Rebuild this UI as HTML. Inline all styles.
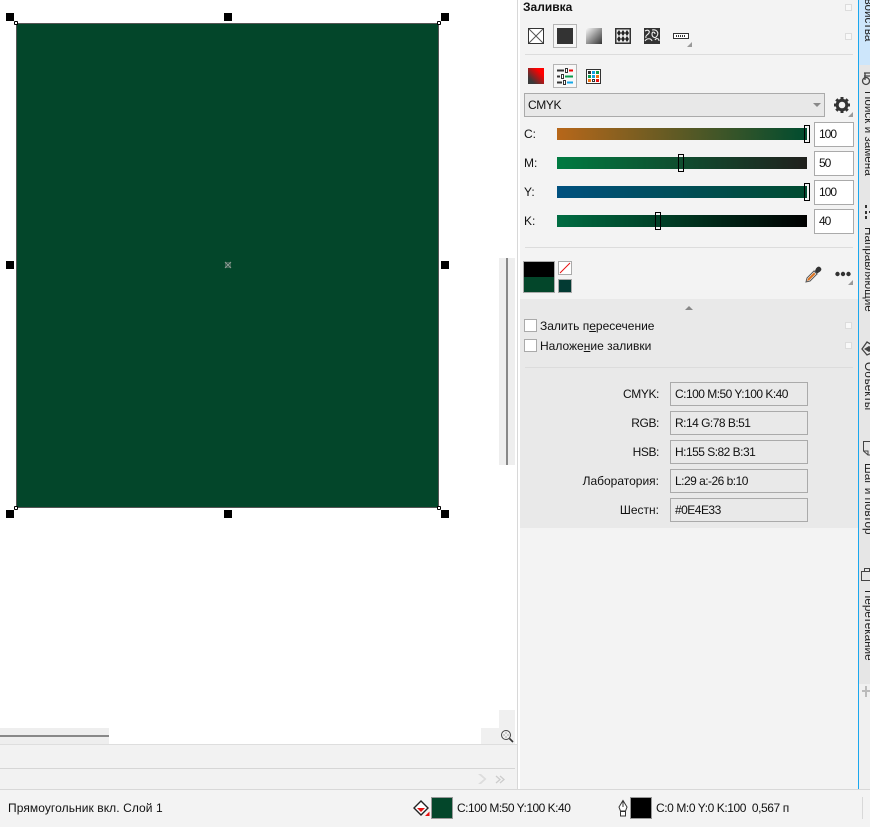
<!DOCTYPE html>
<html lang="ru">
<head>
<meta charset="utf-8">
<title>Заливка</title>
<style>
html,body{margin:0;padding:0;background:#fff}
body{position:relative;width:870px;height:827px;overflow:hidden;font-family:"Liberation Sans",sans-serif;font-size:12px;color:#111}
.a{position:absolute;box-sizing:border-box}
.t{position:absolute;white-space:nowrap;line-height:14px}
.h{position:absolute;width:8px;height:8px;background:#000}
.n{position:absolute;width:4px;height:4px;background:#fff;border:1px solid #000;box-sizing:border-box;border-radius:1px}
.mini{position:absolute;width:7px;height:7px;background:#f8f8f8;border:1px solid #dcdcdc;box-sizing:border-box}
.sep{position:absolute;height:1px;background:#dcdcdc}
.bar{position:absolute;left:557px;width:250px;height:12px}
.th{position:absolute;width:6px;height:18px;border:1px solid #000;box-sizing:border-box}
.inp{position:absolute;left:814px;width:40px;height:25px;background:#fff;border:1px solid #aaa;box-sizing:border-box;padding-left:4px;line-height:23px;letter-spacing:-1px}
.lab{position:absolute;left:524px;line-height:14px}
.rl{position:absolute;right:211px;width:120px;text-align:right;line-height:14px}
.lat{letter-spacing:-.4px}
.val{position:absolute;left:670px;width:138px;height:24px;border:1px solid #aaa;box-sizing:border-box;padding-left:4px;line-height:23px;letter-spacing:-.52px}
.cb{position:absolute;left:524px;width:13px;height:13px;background:#fff;border:1px solid #aaa;box-sizing:border-box}
.v{position:absolute;left:2px;writing-mode:vertical-rl;white-space:nowrap;line-height:14px;font-size:11.7px;color:#222}
.tri{position:absolute;width:0;height:0;border-left:5px solid transparent;border-bottom:5px solid #999}
svg{position:absolute;overflow:visible}
</style>
</head>
<body>
<!-- canvas -->
<div class="a" style="left:16px;top:23px;width:423px;height:485px;background:#03462a;border:1px solid #555"></div>
<div class="h" style="left:6px;top:13px"></div>
<div class="h" style="left:224px;top:13px"></div>
<div class="h" style="left:441px;top:13px"></div>
<div class="h" style="left:6px;top:261px"></div>
<div class="h" style="left:441px;top:261px"></div>
<div class="h" style="left:6px;top:510px"></div>
<div class="h" style="left:224px;top:510px"></div>
<div class="h" style="left:441px;top:510px"></div>
<div class="n" style="left:14px;top:21px"></div>
<div class="n" style="left:437px;top:21px"></div>
<div class="n" style="left:14px;top:506px"></div>
<div class="n" style="left:437px;top:506px"></div>
<svg style="left:225px;top:262px" width="6" height="6"><rect x=".5" y=".5" width="5" height="5" fill="#1c4a38" stroke="#5c7a6c" stroke-width=".6"/><path d="M0 0L6 6M6 0L0 6" stroke="#8a9a92" stroke-width="1.100"/></svg>

<!-- scrollbars -->
<div class="a" style="left:499px;top:258px;width:16px;height:207px;background:#eee"></div>
<div class="a" style="left:506px;top:258px;width:2px;height:207px;background:#888"></div>
<div class="a" style="left:0;top:728px;width:109px;height:16px;background:#eee"></div>
<div class="a" style="left:0;top:735px;width:109px;height:2px;background:#888"></div>
<div class="a" style="left:499px;top:710px;width:16px;height:18px;background:#f0f0f0"></div>
<div class="a" style="left:481px;top:728px;width:34px;height:16px;background:#f0f0f0"></div>
<svg style="left:500px;top:729px" width="14" height="14" viewBox="0 0 14 14"><circle cx="6" cy="6" r="4.500" fill="none" stroke="#444" stroke-width="1"/><path d="M9.500 9.500L13 13" stroke="#333" stroke-width="1.600"/><path d="M6 3.500v1M6 7.500v1M3.500 6h1M7.500 6h1" stroke="#666"/></svg>

<!-- lower bars -->
<div class="a" style="left:0;top:744px;width:517px;height:45px;background:#f2f2f2"></div>
<div class="a" style="left:0;top:744px;width:517px;height:1px;background:#dedede"></div>
<div class="a" style="left:0;top:768px;width:515px;height:1px;background:#d6d6d6"></div>
<svg style="left:477px;top:773px" width="30" height="12" viewBox="0 0 30 12"><path d="M1 1L7 6L1 11H4L9.500 6L4 1Z" fill="#ddd"/><path d="M19 3L23 6.500L19 10M23 3L27 6.500L23 10" fill="none" stroke="#ccc" stroke-width="1.300"/></svg>

<!-- splitter -->
<div class="a" style="left:517px;top:0;width:1px;height:789px;background:#d8d8d8"></div>

<!-- panel -->
<div class="a" style="left:520px;top:0;width:338px;height:789px;background:#f3f3f3"></div>
<div class="a" style="left:858px;top:0;width:1px;height:789px;background:#1aa7ee"></div>
<div class="t" style="left:523px;top:0;font-weight:bold;font-size:12px">Заливка</div>
<div class="mini" style="left:845px;top:4px"></div>
<div class="mini" style="left:845px;top:33px"></div>

<!-- fill type icons -->
<svg style="left:528px;top:28px" width="16" height="16"><rect x=".5" y=".5" width="15" height="15" fill="#fff" stroke="#333"/><path d="M1 1L15 15M15 1L1 15" stroke="#555"/></svg>
<div class="a" style="left:553px;top:24px;width:24px;height:24px;background:#f6f6f6;border:1px solid #b5b5b5"></div>
<div class="a" style="left:557px;top:28px;width:16px;height:16px;background:#333"></div>
<div class="a" style="left:586px;top:28px;width:16px;height:16px;background:linear-gradient(135deg,#fafafa,#333)"></div>
<svg style="left:615px;top:28px" width="16" height="16"><rect x=".75" y=".75" width="14.500" height="14.500" fill="#eee" stroke="#333" stroke-width="1.500"/><g fill="#222"><path d="M4 2L6 5L4 8L2 5ZM8 2L10 5L8 8L6 5ZM12 2L14 5L12 8L10 5ZM4 8L6 11L4 14L2 11ZM8 8L10 11L8 14L6 11ZM12 8L14 11L12 14L10 11Z"/></g></svg>
<svg style="left:644px;top:28px" width="16" height="16"><rect width="16" height="16" fill="#333"/><path d="M1 3C4 1 6 3 5 5S1 7 2 10M8 2C13 1 15 5 13 8S8 9 8 6 11 4 11 6M1 13C3 10 7 10 8 13M11 12C12 10 15 10 15 13" fill="none" stroke="#eee" stroke-width="1.100"/></svg>
<svg style="left:673px;top:33px" width="16" height="7"><rect x=".5" y=".5" width="15" height="5" fill="#fff" stroke="#333"/><path d="M3 3h10" stroke="#333" stroke-dasharray="1 1" stroke-width="2"/></svg>
<div class="tri" style="left:687px;top:42px"></div>

<div class="sep" style="left:525px;top:54px;width:328px"></div>

<div class="a" style="left:528px;top:68px;width:16px;height:16px;background:linear-gradient(45deg,#3a3a3a 20%,#ff0000 75%)"></div>
<div class="a" style="left:553px;top:64px;width:24px;height:24px;background:#f8f8f8;border:1px solid #b5b5b5"></div>
<svg style="left:557px;top:68px" width="16" height="16"><path d="M0 2.500h7M0 8.500h3M0 14.500h5" stroke="#333" stroke-width="2"/><path d="M12 2.500h4" stroke="#e00" stroke-width="2"/><path d="M8 8.500h8" stroke="#0a9a4a" stroke-width="2"/><path d="M10 14.500h6" stroke="#12a8e8" stroke-width="2"/><rect x="8.500" y=".5" width="2" height="4" fill="#fff" stroke="#333"/><rect x="4.500" y="6.500" width="2" height="4" fill="#fff" stroke="#333"/><rect x="6.500" y="12.500" width="2" height="4" fill="#fff" stroke="#333"/></svg>
<svg style="left:586px;top:69px" width="15" height="15"><rect x=".5" y=".5" width="14" height="14" fill="#fff" stroke="#333"/><rect x="2" y="2" width="3" height="3" fill="#333"/><rect x="6" y="2" width="3" height="3" fill="#12a0e0"/><rect x="10" y="2" width="3" height="3" fill="#0a9a4a"/><rect x="2" y="6" width="3" height="3" fill="#0a9a4a"/><rect x="6" y="6" width="3" height="3" fill="#12a0e0"/><rect x="10" y="6" width="3" height="3" fill="#f07010"/><rect x="2" y="10" width="3" height="3" fill="#f07010"/><rect x="6.500" y="10.500" width="2" height="2" fill="#fff" stroke="#333"/><rect x="10" y="10" width="3" height="3" fill="#e81010"/></svg>

<!-- model select -->
<div class="a" style="left:524px;top:93px;width:301px;height:24px;background:#e8e8e8;border:1px solid #aaa;padding-left:3px;line-height:23px;letter-spacing:-.4px">CMYK</div>
<div class="a" style="left:813px;top:103px;width:0;height:0;border-left:4px solid transparent;border-right:4px solid transparent;border-top:4px solid #888"></div>
<svg style="left:834px;top:97px" width="16" height="16" viewBox="0 0 16 16"><circle cx="8" cy="8" r="4.800" fill="none" stroke="#333" stroke-width="3"/><g stroke="#333" stroke-width="3"><path d="M8 0v3M8 13v3M0 8h3M13 8h3M2.300 2.300l2.100 2.100M11.600 11.600l2.100 2.100M13.700 2.300l-2.100 2.100M4.400 11.600l-2.100 2.100"/></g></svg>
<div class="tri" style="left:848px;top:112px"></div>

<!-- sliders -->
<div class="lab" style="top:127px">C:</div>
<div class="lab" style="top:156px">M:</div>
<div class="lab" style="top:185px">Y:</div>
<div class="lab" style="top:214px">K:</div>
<div class="bar" style="top:128px;background:linear-gradient(90deg,#b7671a,#004c2f)"></div>
<div class="bar" style="top:157px;background:linear-gradient(90deg,#007a41,#20201d)"></div>
<div class="bar" style="top:186px;background:linear-gradient(90deg,#00507f,#004b2f)"></div>
<div class="bar" style="top:215px;background:linear-gradient(90deg,#006c42,#000)"></div>
<div class="th" style="left:804px;top:125px"></div>
<div class="th" style="left:678px;top:154px"></div>
<div class="th" style="left:804px;top:183px"></div>
<div class="th" style="left:655px;top:212px"></div>
<div class="inp" style="top:122px">100</div>
<div class="inp" style="top:151px">50</div>
<div class="inp" style="top:180px">100</div>
<div class="inp" style="top:209px">40</div>

<div class="sep" style="left:525px;top:247px;width:328px"></div>

<!-- swatches -->
<div class="a" style="left:523px;top:261px;width:32px;height:32px;border:1px solid #aaa;background:linear-gradient(#000 50%,#03462a 50%)"></div>
<svg style="left:558px;top:261px" width="14" height="14"><rect x=".5" y=".5" width="13" height="13" fill="#fff" stroke="#aaa"/><path d="M2 12L12 2" stroke="#e81010"/></svg>
<div class="a" style="left:558px;top:279px;width:14px;height:14px;background:#033a33;border:1px solid #aaa"></div>
<svg style="left:805px;top:266px" width="17" height="17" viewBox="0 0 17 17"><path d="M1 16L2 12L9 5L12 8L5 15Z" fill="#fff" stroke="#555"/><path d="M2 15L3 12.500L9 6.500L10.500 8L4.500 14Z" fill="#d9701e"/><path d="M8 3L10 5L11 2.500C12.500 .5 14 0 15.500 1.500S16.500 4.500 14.500 6L12 7.500L14 9.500Z" fill="#333"/></svg>
<svg style="left:835px;top:271px" width="16" height="6"><circle cx="2.500" cy="3" r="2.200" fill="#333"/><circle cx="8" cy="3" r="2.200" fill="#333"/><circle cx="13.500" cy="3" r="2.200" fill="#333"/></svg>
<div class="tri" style="left:848px;top:280px"></div>

<!-- grey section -->
<div class="a" style="left:520px;top:299px;width:338px;height:229px;background:#e9e9e9"></div>
<div class="a" style="left:685px;top:306px;width:0;height:0;border-left:4px solid transparent;border-right:4px solid transparent;border-bottom:4px solid #888"></div>
<div class="cb" style="top:319px"></div>
<div class="cb" style="top:339px"></div>
<div class="t" style="left:540px;top:319px">Залить п<u>е</u>ресечение</div>
<div class="t" style="left:540px;top:339px">Наложе<u>н</u>ие заливки</div>
<div class="mini" style="left:845px;top:322px"></div>
<div class="mini" style="left:845px;top:342px"></div>
<div class="sep" style="left:525px;top:367px;width:328px"></div>

<div class="rl lat" style="top:387px">CMYK:</div>
<div class="rl lat" style="top:416px">RGB:</div>
<div class="rl lat" style="top:445px">HSB:</div>
<div class="rl" style="top:474px">Лаборатория:</div>
<div class="rl" style="top:503px">Шестн:</div>
<div class="val" style="top:382px">C:100 M:50 Y:100 K:40</div>
<div class="val" style="top:411px">R:14 G:78 B:51</div>
<div class="val" style="top:440px">H:155 S:82 B:31</div>
<div class="val" style="top:469px">L:29 a:-26 b:10</div>
<div class="val" style="top:498px">#0E4E33</div>

<!-- right tabs -->
<div class="a" style="left:859px;top:0;width:11px;height:789px;background:#e6e6e6;overflow:hidden">
  <div class="a" style="left:0;top:0;width:11px;height:65px;background:#cde6fb"></div>
  <div class="a" style="left:0;top:684px;width:11px;height:105px;background:#f0f0f0"></div>
  <div class="v" style="top:-10px">Свойства</div>
  <div class="v" style="top:91px">Поиск и замена</div>
  <div class="v" style="top:227px">Направляющие</div>
  <div class="v" style="top:362px">Объекты</div>
  <div class="v" style="top:463px">Шаг и повтор</div>
  <div class="v" style="top:590px">Перетекание</div>
  <svg style="left:2px;top:72px" width="12" height="14"><circle cx="5" cy="9" r="3.500" fill="none" stroke="#444" stroke-width="1.300"/><path d="M3 1h9M3 4h9M4 1v7" stroke="#444" stroke-width="1.300" fill="none"/></svg>
  <svg style="left:3px;top:205px" width="12" height="14"><path d="M4 0v3M4 6v3M4 11v3M7 7h3" stroke="#333" stroke-width="2"/></svg>
  <svg style="left:3px;top:341px" width="12" height="15"><path d="M5 1L12 5V11L5 14L0 8Z" fill="none" stroke="#444" stroke-width="1.300"/><path d="M2 8L7 11L12 8L7 5Z" fill="#444"/></svg>
  <svg style="left:3px;top:441px" width="12" height="16"><path d="M1.500 .5H12V14H6L1.500 10Z" fill="none" stroke="#444"/><path d="M1.500 10H6V14" fill="none" stroke="#444"/></svg>
  <svg style="left:2px;top:568px" width="12" height="14"><rect x=".5" y="3.500" width="12" height="9" fill="none" stroke="#444"/><rect x="3.500" y=".5" width="5" height="3" fill="none" stroke="#444"/></svg>
  <svg style="left:3px;top:686px" width="8" height="12"><path d="M0 5h8M4 0v11" stroke="#bbb" stroke-width="2"/></svg>
</div>

<!-- status bar -->
<div class="a" style="left:0;top:789px;width:870px;height:38px;background:#f3f3f3;border-top:1px solid #d8d8d8"></div>
<div class="t" style="left:8px;top:801px;letter-spacing:.08px">Прямоугольник вкл. Слой 1</div>
<svg style="left:413px;top:800px" width="17" height="17" viewBox="0 0 17 17"><path d="M8 1L15 8L8 15L1 8Z" fill="#fff" stroke="#222" stroke-width="1.400"/><path d="M4 8H12L8 12Z" fill="#e81010"/><path d="M12 16L16.500 11.500V16Z" fill="#e81010"/></svg>
<div class="a" style="left:431px;top:797px;width:22px;height:22px;background:#03462a;border:1px solid #999"></div>
<div class="t" style="left:457px;top:801px;letter-spacing:-.5px">C:100 M:50 Y:100 K:40</div>
<svg style="left:618px;top:800px" width="10" height="17" viewBox="0 0 10 17"><path d="M5 .5L9 7L7.500 11H2.500L1 7Z" fill="#fff" stroke="#333"/><path d="M5 1V7" stroke="#333"/><rect x="2.500" y="11.500" width="5" height="4.500" fill="#fff" stroke="#333"/></svg>
<div class="a" style="left:630px;top:797px;width:22px;height:22px;background:#000;border:1px solid #999"></div>
<div class="t" style="left:656px;top:801px;letter-spacing:-.42px">C:0 M:0 Y:0 K:100&nbsp; 0,567 п</div>
<div class="a" style="left:862px;top:797px;width:1px;height:22px;background:#d8d8d8"></div>
</body>
</html>
